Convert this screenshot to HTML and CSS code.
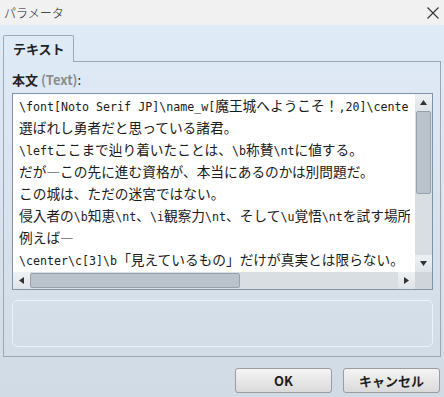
FILE: index.html
```html
<!DOCTYPE html>
<html lang="ja">
<head>
<meta charset="utf-8">
<title>パラメータ</title>
<link rel="stylesheet" href="styles.css">
</head>
<body>
<div class="dialog">
  <div class="titlebar">
    <span class="title">パラメータ</span>
    <svg class="close" width="12" height="12" viewBox="0 0 12 12"><path d="M0.5 0.5 L11.5 11.5 M11.5 0.5 L0.5 11.5" stroke="#333" stroke-width="1.1" fill="none"/></svg>
  </div>
  <div class="content">
    <div class="tabrow">
      <div class="tab">テキスト</div>
      <div class="tabfill"></div>
    </div>
    <div class="panel">
      <div class="label"><b>本文</b> <span class="hint">(Text)</span>:</div>
      <div class="textarea">
        <div class="code">
          <div class="line"><span class="a">\font[Noto Serif JP]\name_w[</span>魔王城へようこそ！<span class="a">,20]\center</span></div>
          <div class="line">選ばれし勇者だと思っている諸君。</div>
          <div class="line"><span class="a">\left</span>ここまで辿り着いたことは、<span class="a">\b</span>称賛<span class="a">\nt</span>に値する。</div>
          <div class="line">だが―この先に進む資格が、本当にあるのかは別問題だ。</div>
          <div class="line">この城は、ただの迷宮ではない。</div>
          <div class="line">侵入者の<span class="a">\b</span>知恵<span class="a">\nt</span>、<span class="a">\i</span>観察力<span class="a">\nt</span>、そして<span class="a">\u</span>覚悟<span class="a">\nt</span>を試す場所だ。</div>
          <div class="line">例えば―</div>
          <div class="line"><span class="a">\center\c[3]\b</span>「見えているもの」だけが真実とは限らない。</div>
          <div class="line"><span class="a">\right\c[22]</span>ただし、油断は禁物だ。</div>
        </div>
        <div class="vscroll">
          <div class="btn"><svg width="7" height="5" viewBox="0 0 7 5"><path d="M3.5 0 L7 5 L0 5 Z" fill="#333"/></svg></div>
          <div class="vtrack"><div class="vthumb"></div></div>
          <div class="btn"><svg width="7" height="5" viewBox="0 0 7 5"><path d="M0 0 L7 0 L3.5 5 Z" fill="#333"/></svg></div>
        </div>
        <div class="hscroll">
          <div class="btn"><svg width="5" height="7" viewBox="0 0 5 7"><path d="M5 0 L5 7 L0 3.5 Z" fill="#333"/></svg></div>
          <div class="htrack"><div class="hthumb"></div></div>
          <div class="btn"><svg width="5" height="7" viewBox="0 0 5 7"><path d="M0 0 L5 3.5 L0 7 Z" fill="#333"/></svg></div>
        </div>
        <div class="corner"></div>
      </div>
      <div class="emptybox"></div>
    </div>
    <div class="buttons">
      <button class="button">OK</button>
      <button class="button">キャンセル</button>
    </div>
  </div>
</div>
</body>
</html>
```
FILE: styles.css
```css
html, body {
  margin: 0;
  padding: 0;
}
body {
  width: 444px;
  height: 397px;
  overflow: hidden;
  font-family: "Noto Sans CJK JP", sans-serif;
  color: #1e1e1e;
}
.dialog {
  display: flex;
  flex-direction: column;
  height: 397px;
}
.titlebar {
  height: 25px;
  flex: none;
  background: #f1f1f1;
  display: flex;
  align-items: center;
  justify-content: space-between;
  padding: 0 5px 0 4px;
}
.title {
  font-size: 12px;
  font-weight: 300;
  color: #202020;
}
.close {
  display: block;
}
.content {
  flex: 1;
  background: linear-gradient(#e0ebf8, #d1dbe5);
  padding: 10px 3px 0 3px;
  display: flex;
  flex-direction: column;
}
.tabrow {
  display: flex;
  height: 27px;
}
.tab {
  width: 71px;
  border: 1px solid #9ca8b4;
  border-bottom: none;
  border-radius: 2px 2px 0 0;
  font-size: 13px;
  font-weight: bold;
  padding-left: 9px;
  line-height: 26px;
  box-sizing: border-box;
  color: #222;
}
.tabfill {
  flex: 1;
  border-bottom: 1px solid #9ca8b4;
}
.panel {
  border: 1px solid #9ca8b4;
  border-top: none;
  padding: 7px 7px 9px 8px;
  display: flex;
  flex-direction: column;
}
.label {
  font-size: 13px;
  line-height: 22px;
  height: 22px;
  margin-bottom: 2px;
  color: #222;
}
.label b {
  font-weight: bold;
}
.hint {
  color: #8c8c8c;
  font-weight: bold;
}
.textarea {
  height: 197px;
  box-sizing: border-box;
  border: 1px solid #8193a7;
  background: #fff;
  display: grid;
  grid-template-columns: 1fr 17px;
  grid-template-rows: 1fr 17px;
}
.code {
  overflow: hidden;
  margin-right: 5px;
  padding-left: 6px;
  font-size: 13.7px;
  color: #1a1a1a;
  white-space: nowrap;
}
.line {
  height: 22px;
  line-height: 22px;
}
.a {
  font-family: "DejaVu Sans Mono", monospace;
  font-size: 11.65px;
}
.vscroll {
  display: flex;
  flex-direction: column;
  background: #d9dee3;
}
.hscroll {
  display: flex;
  background: #d9dee3;
}
.btn {
  width: 17px;
  height: 17px;
  flex: none;
  display: flex;
  align-items: center;
  justify-content: center;
  background: linear-gradient(#eef1f4, #dfe4e9);
  box-sizing: border-box;
}
.btn svg {
  display: block;
}
.vtrack {
  flex: 1;
  padding: 0 1px;
}
.vthumb {
  height: 83px;
  background: #bac3cc;
  border: 1px solid #96a2ae;
  border-radius: 2px;
  box-sizing: border-box;
}
.htrack {
  flex: 1;
  padding: 1px 0;
}
.hthumb {
  width: 210px;
  height: 100%;
  background: #bac3cc;
  border: 1px solid #96a2ae;
  border-radius: 2px;
  box-sizing: border-box;
}
.corner {
  background: #cfd5db;
}
.emptybox {
  margin-top: 10px;
  height: 47px;
  border: 1px solid #edf2f7;
  border-radius: 5px;
  box-sizing: border-box;
}
.buttons {
  display: flex;
  justify-content: flex-end;
  gap: 11px;
  margin-top: 11px;
  padding-right: 1px;
}
.button {
  width: 97px;
  height: 25px;
  border: 1px solid #9c9c9c;
  border-radius: 3px;
  background: linear-gradient(#f4f4f4, #dadada);
  font-family: "Noto Sans CJK JP", sans-serif;
  font-size: 13px;
  font-weight: bold;
  color: #1e1e1e;
  padding: 0;
}
```
